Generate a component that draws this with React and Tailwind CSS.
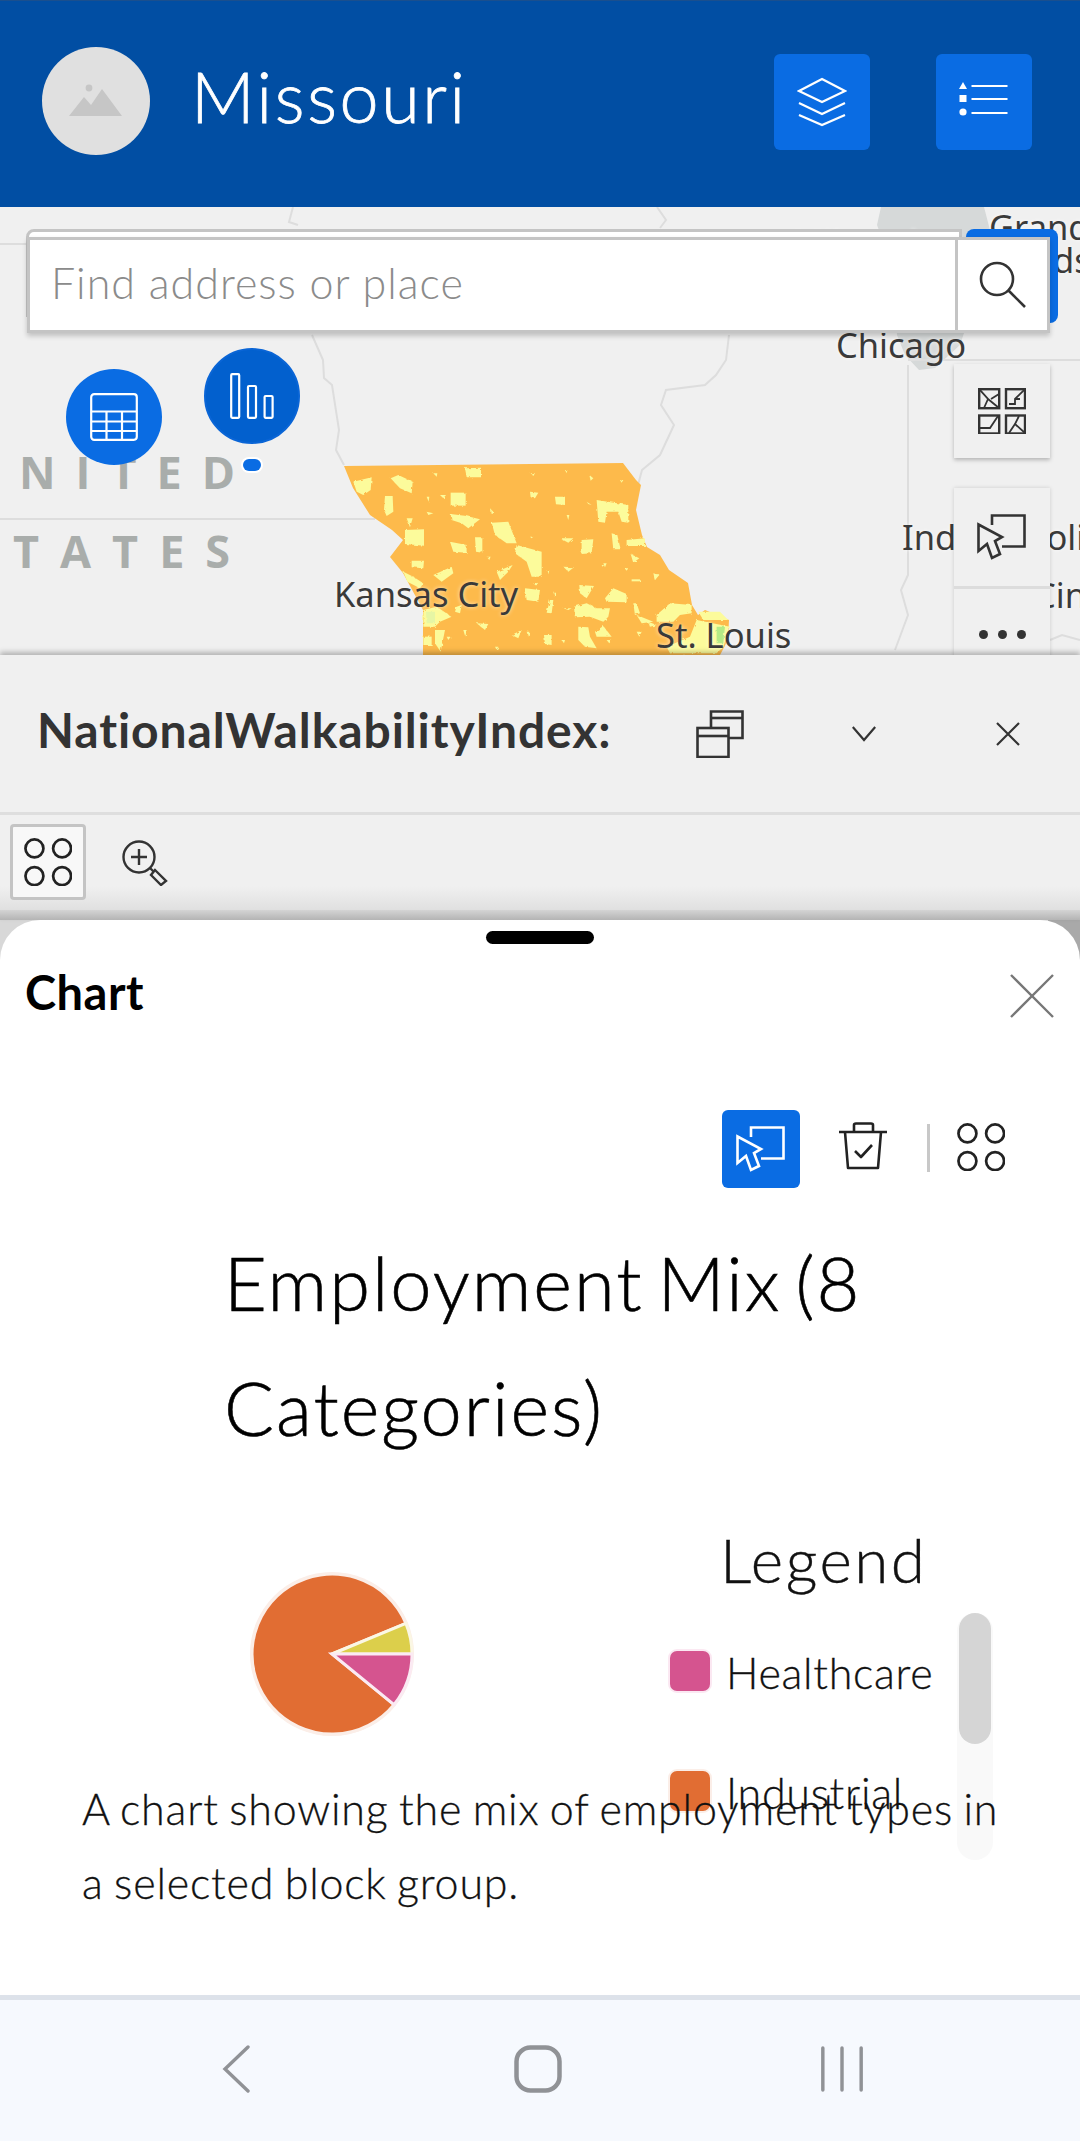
const Patches = [
  "100,125 155,112 152,150 130,165 110,155","212,115 235,105 278,125 275,160 240,145","435,85 483,83 483,112 440,112",
  "195,168 218,168 220,215 200,228 192,210","392,158 437,158 437,197 392,197","392,222 440,228 480,238 445,265 425,250 395,240",
  "255,270 312,268 312,317 255,312","515,248 565,245 590,310 560,310 525,285","590,315 665,335 665,410 635,410 620,365 585,340",
  "390,305 440,315 440,338 400,335","465,292 487,292 487,338 468,335","630,155 655,158 645,175 632,172","705,170 735,170 735,195 708,193",
  "830,180 925,195 925,248 905,245 895,215 860,215 855,248 835,245","785,300 820,298 815,340 785,342","875,280 892,285 902,328 880,328",
  "920,300 975,295 975,318 920,318","932,342 958,355 940,368","275,362 312,362 310,385 275,382","530,395 578,375 565,395 540,420",
  "615,445 660,450 655,485 620,480","778,435 822,438 800,475 780,460","855,475 880,445 920,462 920,487 860,485",
  "762,500 800,490 830,505 870,505 865,530 850,545 810,530 765,532","775,560 805,562 810,590 830,625 795,620 775,600","825,575 850,558 875,590 830,590",
  "672,585 695,585 695,615 675,612","1010,525 1050,490 1115,495 1115,520 1080,525 1060,545 1010,545","950,525 1000,545 965,550",
  "250,395 280,410 310,430 300,445 262,425","340,405 395,380 400,400 365,425","410,500 425,495 420,520 405,515","310,510 350,500 395,530 360,545 345,560 310,560",
  "310,590 335,590 335,615 310,615","470,550 505,552 495,570","575,585 605,570 595,595",
  "345,570 375,570 362,635 345,610","1130,540 1230,560 1210,620 1190,640 1130,640 1050,640 1040,620 1110,590",
  "720,295 760,295 745,308","1000,400 1018,405 1005,420","320,170 328,170 326,185","360,165 378,165 370,175","510,205 520,215 512,220","800,185 815,195 805,192",
  "260,235 278,235 270,262","630,290 640,290 635,295","850,370 860,370 855,382","915,385 925,385 920,392","935,418 960,418 960,424 935,424","690,480 700,480 695,520 680,518","730,505 755,505 745,510","430,570 440,570 436,590",
  "340,100 352,100 350,110","632,100 645,100 640,108","735,90 742,90 740,100","808,105 820,115 812,122","900,120 910,120 905,128","740,225 748,225 745,240",
  "320,215 340,220 325,225","500,350 512,350 508,360","680,390 688,390 684,400","730,380 762,382 745,395","845,375 852,375 848,380","1002,405 1018,402 1005,420",
  "700,455 708,455 704,470","640,430 650,425 652,440","380,590 392,590 385,600","525,620 535,620 530,630","725,600 735,600 732,610","620,575 628,575 625,590",
  "940,490 950,490 960,520 945,525","860,600 875,600 868,610","985,545 1010,555 990,560","1135,515 1200,515 1225,540 1150,540","950,575 965,575 958,590",
];

const Circles4 = ({ className }) => (
  <svg viewBox="0 0 46 46" className={className} fill="none" stroke="currentColor" strokeWidth="2.6">
    <circle cx="10" cy="10" r="8.6" /><circle cx="36.5" cy="10" r="8.6" /><circle cx="10" cy="36.5" r="8.6" /><circle cx="36.5" cy="36.5" r="8.6" />
  </svg>
);

const SelectIcon = ({ stroke, fill }) => (
  <svg viewBox="0 0 50 46" className="w-[50px] h-[46px]" fill="none" stroke={stroke} strokeWidth="2.6">
    <path d="M15 11V1.5H47.5V32.5H25" />
    <path d="M1.5 10.5V37L10 30L15 44L23 40L18 27L25 23Z" fill={fill} strokeLinejoin="miter" />
  </svg>
);

export default function App() {
  return (
    <div className="w-[1080px] h-[2141px] overflow-hidden flex flex-col bg-white font-[Lato,sans-serif]">
      {/* Header */}
      <header className="h-[207px] shrink-0 bg-[#014ea3] border-t border-[#1a4f8e] flex items-center pl-[42px] pr-[48px]">
        <div className="w-[108px] h-[108px] rounded-full bg-[#e0e0e0] flex items-center justify-center -mt-[6px]">
          <svg viewBox="0 0 54 34" className="w-[54px] h-[34px]" fill="#c6c6c6">
            <circle cx="20" cy="4" r="3.4" />
            <path d="M0 32L15 13L22 21L33 5L53 32Z" />
          </svg>
        </div>
        <h1 className="ml-[41px] flex-1 text-[70px] leading-none font-light tracking-[2.6px] [-webkit-text-stroke:0.8px_#fff] text-white -mt-[16px]">Missouri</h1>
        <div className="flex gap-[66px] -mt-[4px]">
          <button className="w-[96px] h-[96px] rounded-[6px] bg-[#0a6ce3] flex items-center justify-center">
            <svg viewBox="0 0 50 50" className="w-[50px] h-[50px]" fill="none" stroke="#fff" strokeWidth="2.2">
              <path d="M25 2L48 14L25 25L2 14Z" /><path d="M2 26L25 37L48 26" /><path d="M2 38L25 48L48 38" />
            </svg>
          </button>
          <button className="w-[96px] h-[96px] rounded-[6px] bg-[#0a6ce3] flex items-center justify-center">
            <svg viewBox="0 0 50 40" className="w-[50px] h-[40px]" fill="#fff" stroke="none">
              <path d="M4 0L8 7H0Z" /><rect x="0.5" y="13" width="7" height="7" /><circle cx="4" cy="30" r="3.6" />
              <rect x="12.5" y="3" width="36" height="2" /><rect x="12.5" y="16" width="36" height="2" /><rect x="12.5" y="30" width="36" height="2" />
            </svg>
          </button>
        </div>
      </header>

      {/* Map */}
      <section className="h-[448px] shrink-0 relative overflow-hidden bg-[#f0f0f0]">
        <svg viewBox="0 207 1080 448" className="absolute inset-0 w-[1080px] h-[448px]" fill="none">
          <defs>
            <filter id="rough" x="-5%" y="-5%" width="110%" height="110%">
              <feTurbulence type="fractalNoise" baseFrequency="0.09" numOctaves="2" seed="4" />
              <feDisplacementMap in="SourceGraphic" scale="9" />
            </filter>
          </defs>
          <path d="M881 207L877 225L890 260L897 335L905 355L919 370L935 368L960 345L975 300L990 230L984 207Z" fill="#d6d9d9" />
          <g stroke="#dddddd" strokeWidth="2">
            <path d="M293 207L289 222L298 225" />
            <path d="M312 335L323 360L324 378L332 385L339 430L336 450L344 465" />
            <path d="M0 244H26" />
            <path d="M0 519H375" />
            <path d="M657 207L666 220L660 228" />
            <path d="M729 335L726 360L716 375L705 385L666 390L661 405L674 425L660 455L642 470L638 485" />
            <path d="M908 365V575L901 590L908 615L895 650" />
            <path d="M908 360H1080" />
            <path d="M1050 640L1062 635L1080 640" />
          </g>
          <path d="M344 466L623 463L636 480L641 485L636 510L642 535L647 547L660 555L669 570L688 583L692 605L698 615L705 610L729 620L728 640L720 655H423V610L403 573L390 557L403 540L392 530L370 515L353 488Z" fill="#fdba4b" />
          <g transform="translate(320 440) scale(0.3333)" filter="url(#rough)">
            {Patches.map((p) => <polygon key={p} points={p} fill="#fcfb9b" />)}
            <polygon points="1190,560 1215,560 1210,610 1190,610" fill="#b5ea86" />
            <polygon points="318,515 345,515 345,550 320,550" fill="#e6f6a4" />
          </g>
        </svg>

        {[
          ["left-[792px] top-[15px]", "Milwaukee"],
          ["left-[989px] top-[0px]", "Grand"],
          ["left-[982px] top-[33px]", "Rapids"],
          ["left-[836px] top-[118px]", "Chicago"],
          ["left-[902px] top-[310px]", "Indianapolis"],
          ["left-[1034px] top-[368px]", "Cincinnati"],
          ["left-[334px] top-[367px]", "Kansas City"],
          ["left-[656px] top-[408px]", "St. Louis"],
        ].map(([pos, t]) => (
          <span key={t} className={`absolute ${pos} whitespace-nowrap text-[34.5px] leading-[40px] text-[#3a3a3a] font-['Noto_Sans',sans-serif] [text-shadow:0_0_4px_#ffffffaa]`}>{t}</span>
        ))}
        <span className="absolute left-[19px] top-[240px] text-[45px] leading-[50px] font-bold text-[#a9adab] tracking-[20px] whitespace-nowrap font-['Open_Sans',sans-serif]">NITED</span>
        <span className="absolute left-[13px] top-[319px] text-[45px] leading-[50px] font-bold text-[#a9adab] tracking-[21px] whitespace-nowrap font-['Open_Sans',sans-serif]">TATES</span>

        {/* Search */}
        <div className="absolute left-[966px] top-[22px] w-[92px] h-[94px] rounded-[8px] bg-[#0a6ce3]" />
        <div className="absolute left-[26px] top-[22px] w-[936px] h-[88px] bg-white border-[3px] border-[#c4c4c4] rounded-tl-[8px]" />
        <div className="absolute left-[27px] top-[30px] w-[1023px] h-[96px] bg-white border-[3px] border-[#c4c4c4] shadow-[0_3px_5px_rgba(0,0,0,0.2)] flex items-center">
          <span className="flex-1 pl-[21px] text-[43px] font-light tracking-[1px] text-[#8b8b8b] -mt-[3px]">Find address or place</span>
          <div className="w-[92px] h-full border-l-[3px] border-[#c4c4c4] flex items-center justify-center">
            <svg viewBox="0 0 48 48" className="w-[48px] h-[48px]" fill="none" stroke="#333" strokeWidth="2.6">
              <circle cx="18" cy="18" r="16" /><path d="M29.5 29.5L46 46" />
            </svg>
          </div>
        </div>

        {/* Floating circle actions */}
        <button className="absolute left-[66px] top-[162px] w-[96px] h-[96px] rounded-full bg-[#0a6ce3] flex items-center justify-center">
          <svg viewBox="0 0 48 48" className="w-[48px] h-[48px]" fill="none" stroke="#fff" strokeWidth="2.2">
            <rect x="1.2" y="1.2" width="45.6" height="45.6" rx="3" />
            <path d="M1.2 18.5H46.8M1.2 28.5H46.8M1.2 38H46.8M16.5 18.5V46.8M32 18.5V46.8" />
          </svg>
        </button>
        <button className="absolute left-[204px] top-[141px] w-[96px] h-[96px] rounded-full bg-[#0260ce] border-2 border-[#0a65d6] flex items-center justify-center">
          <svg viewBox="0 0 44 46" className="w-[44px] h-[46px]" fill="none" stroke="#fff" strokeWidth="2.2">
            <rect x="1.2" y="1.2" width="8" height="43.6" rx="1" /><rect x="18" y="13" width="8" height="31.8" rx="1" /><rect x="34.6" y="23" width="8" height="21.8" rx="1" />
          </svg>
        </button>
        <div className="absolute left-[243px] top-[252px] w-[18px] h-[12px] rounded-full bg-[#0a6ce3] shadow-[0_0_0_2px_#ffffff]" />

        {/* Map widgets */}
        <button className="absolute left-[954px] top-[157px] w-[96px] h-[94px] bg-[#f0f0f0] shadow-[0_2px_4px_rgba(0,0,0,0.25)] flex items-center justify-center">
          <svg viewBox="0 0 48 46" className="w-[48px] h-[46px]" fill="none" stroke="#333" strokeWidth="2.4">
            <rect x="1.2" y="1.2" width="20" height="19" /><rect x="28" y="1.2" width="19" height="19" /><rect x="1.2" y="27.5" width="20" height="18" /><rect x="28" y="27.5" width="19" height="18" />
            <path d="M1.2 1.2L10 11L6 20M10 11L21 20M21 6L13 11" strokeWidth="1.8" />
            <path d="M47 1.2L37 11V16H31M37 11H42" strokeWidth="1.8" />
            <path d="M1.2 40H12L20 28" strokeWidth="1.8" />
            <path d="M47 45L37 36L41 28M37 36L31 45" strokeWidth="1.8" />
          </svg>
        </button>
        <div className="absolute left-[954px] top-[281px] w-[96px] h-[175px] bg-[#f0f0f0] shadow-[0_0_4px_rgba(0,0,0,0.15)] flex flex-col">
          <button className="h-[101px] shrink-0 flex items-center justify-center border-b-[3px] border-[#dcdcdc]">
            <SelectIcon stroke="#333" fill="#f0f0f0" />
          </button>
          <button className="flex-1 flex justify-center gap-[10px] pt-[41px]">
            <span className="w-[9px] h-[9px] rounded-full bg-[#333]" />
            <span className="w-[9px] h-[9px] rounded-full bg-[#333]" />
            <span className="w-[9px] h-[9px] rounded-full bg-[#333]" />
          </button>
        </div>
      </section>

      {/* Attribute panel */}
      <section className="h-[265px] shrink-0 relative bg-[#f0f0f0] shadow-[0_-3px_5px_rgba(0,0,0,0.25)] flex flex-col">
        <div className="h-[160px] shrink-0 flex items-center pl-[37px] pr-[60px] border-b-[3px] border-[#dedede]">
          <h2 className="flex-1 text-[48px] leading-none font-bold tracking-[0.9px] text-[#333] -mt-[8px]">NationalWalkabilityIndex:</h2>
          <svg viewBox="0 0 48 48" className="w-[48px] h-[48px] mr-[108px]" fill="none" stroke="#333" strokeWidth="2.6">
            <path d="M15 17V1.5H46.5V28H33" /><path d="M15 8H46.5" />
            <rect x="1.5" y="18" width="31" height="29" /><path d="M1.5 26H32.5" />
          </svg>
          <svg viewBox="0 0 24 16" className="w-[24px] h-[16px] mr-[120px]" fill="none" stroke="#333" strokeWidth="2.2">
            <path d="M0.8 1L12 14L23.2 1" />
          </svg>
          <svg viewBox="0 0 24 24" className="w-[24px] h-[24px]" fill="none" stroke="#333" strokeWidth="2.2">
            <path d="M1 1L23 23M23 1L1 23" />
          </svg>
        </div>
        <div className="flex items-start pt-[9px] pl-[10px] gap-[36px] flex-1 bg-gradient-to-b from-[#f0f0f0] from-[75%] to-[#e0e0e0]">
          <button className="w-[76px] h-[76px] rounded-[4px] border-[3px] border-[#c4c4c4] bg-[#f8f8f8] flex items-center justify-center text-[#222]">
            <Circles4 className="w-[48px] h-[48px]" />
          </button>
          <svg viewBox="0 0 46 46" className="w-[46px] h-[46px] mt-[16px]" fill="none" stroke="#333" strokeWidth="2.4">
            <circle cx="17" cy="17" r="15.5" /><path d="M17 9V25M9 17H25" />
            <path d="M28 28L32 32" /><path d="M33 30L44 41L39 45L29 35Z" />
          </svg>
        </div>
        <div className="h-[10px] shrink-0 bg-gradient-to-b from-[#d4d4d4] to-[#b4b4b4]" />
      </section>

      {/* Chart sheet */}
      <section className="flex-1 min-h-0 bg-[linear-gradient(90deg,#d8d8d8_0%,#d8d8d8_97%,#a9a9a9_97%)]">
        <div className="h-full bg-white rounded-t-[40px] relative">
          <div className="mx-auto pt-[11px] w-[108px]"><div className="h-[13px] rounded-full bg-black" /></div>
          <div className="flex items-center justify-between pl-[25px] pr-[26px] mt-[28px] h-[48px]">
            <h2 className="text-[47px] leading-none font-bold tracking-[0.5px] text-black -mt-[8px]">Chart</h2>
            <svg viewBox="0 0 44 44" className="w-[44px] h-[44px]" fill="none" stroke="#777" strokeWidth="2.4">
              <path d="M1 1L43 43M43 1L1 43" />
            </svg>
          </div>

          <div className="flex items-center justify-end pr-[75px] mt-[90px] h-[78px]">
            <button className="w-[78px] h-[78px] rounded-[6px] bg-[#0a6ce3] flex items-center justify-center">
              <SelectIcon stroke="#fff" fill="#0a6ce3" />
            </button>
            <svg viewBox="0 0 48 48" className="w-[48px] h-[48px] ml-[39px] -mt-[6px]" fill="none" stroke="#222" strokeWidth="2.6" strokeLinejoin="round">
              <path d="M0 10H48" /><path d="M15 10V3C15 2 16 1.5 17 1.5H32C33 1.5 34 2 34 3V10" />
              <path d="M6 10L9 46H39L42 10" /><path d="M16 29L22 35L33 23" />
            </svg>
            <div className="w-[3px] h-[48px] bg-[#c8c8c8] ml-[40px] -mt-[2px]" />
            <Circles4 className="w-[48px] h-[48px] ml-[27px] -mt-[4px] text-[#222]" />
          </div>

          <h3 className="pl-[224px] pr-[180px] mt-[32px] text-[74px] leading-[125px] font-light tracking-[2px] [word-spacing:-8px] [-webkit-text-stroke:0.6px_#000] text-black">Employment Mix (8 Categories)</h3>

          <div className="flex h-[340px] overflow-hidden relative mt-[56px]">
            <svg viewBox="0 0 170 170" className="w-[170px] h-[170px] ml-[247px] mt-[43px] shrink-0">
              <circle cx="85" cy="85" r="82" fill="#fbeee8" />
              <path d="M85 85L158.9 54.4A80 80 0 1 0 147 135.7Z" fill="#e16d33" stroke="#fbeee8" strokeWidth="3" />
              <path d="M85 85L158.9 54.4A80 80 0 0 1 165 85Z" fill="#dccf4b" stroke="#fbf7e4" strokeWidth="3" />
              <path d="M85 85H165A80 80 0 0 1 147 135.7Z" fill="#d5548f" stroke="#fbeaf3" strokeWidth="3" />
            </svg>
            <div className="ml-[253px] w-[290px] shrink-0 flex flex-col">
              <div className="text-[62px] leading-[70px] font-light tracking-[2.5px] [-webkit-text-stroke:0.4px_#111] text-[#111] pl-[50px] -mt-[2px]">Legend</div>
              <div className="flex items-center gap-[16px] mt-[57px] h-[40px]">
                <span className="w-[40px] h-[40px] rounded-[7px] bg-[#d5548f] shadow-[0_0_0_2px_#fbe8f2]" />
                <span className="text-[43px] font-light tracking-[0.7px] [-webkit-text-stroke:0.3px_#111] text-[#111] mt-[5px]">Healthcare</span>
              </div>
              <div className="flex items-center gap-[16px] mt-[80px] h-[40px]">
                <span className="w-[40px] h-[40px] rounded-[7px] bg-[#e16d33] shadow-[0_0_0_2px_#fbeee8]" />
                <span className="text-[43px] font-light tracking-[0.7px] [-webkit-text-stroke:0.3px_#111] text-[#111] mt-[5px]">Industrial</span>
              </div>
            </div>
            <div className="absolute left-[957px] top-[87px] w-[36px] h-[247px] rounded-full bg-[#f9f9f9]">
              <div className="mx-[2px] h-[131px] rounded-full bg-[#d5d5d5]" />
            </div>
          </div>

          <p className="relative -mt-[94px] pl-[82px] pr-[58px] text-[43px] leading-[74px] font-light tracking-[0.8px] [word-spacing:-2px] [-webkit-text-stroke:0.3px_#111] text-[#111]">A chart showing the mix of employment types in a selected block group.</p>
        </div>
      </section>

      {/* Android nav */}
      <nav className="h-[146px] shrink-0 border-t-[5px] border-[#dde2ea] bg-[#f6f9fe] flex items-center pl-[222px]">
        <div className="flex items-center -mt-[4px]">
          <svg viewBox="0 0 28 48" className="w-[28px] h-[48px] mr-[264px]" fill="none" stroke="#909296" strokeWidth="3.4" strokeLinecap="round"><path d="M26 2L3 24L26 46" /></svg>
          <svg viewBox="0 0 48 48" className="w-[48px] h-[48px] mr-[257px]" fill="none" stroke="#909296" strokeWidth="4.5"><rect x="2.5" y="2.5" width="43" height="43" rx="14" /></svg>
          <svg viewBox="0 0 48 48" className="w-[46px] h-[48px]" fill="none" stroke="#909296" strokeWidth="3.6" strokeLinecap="round"><path d="M4 2V46M24 2V46M44 2V46" /></svg>
        </div>
      </nav>
    </div>
  );
}
